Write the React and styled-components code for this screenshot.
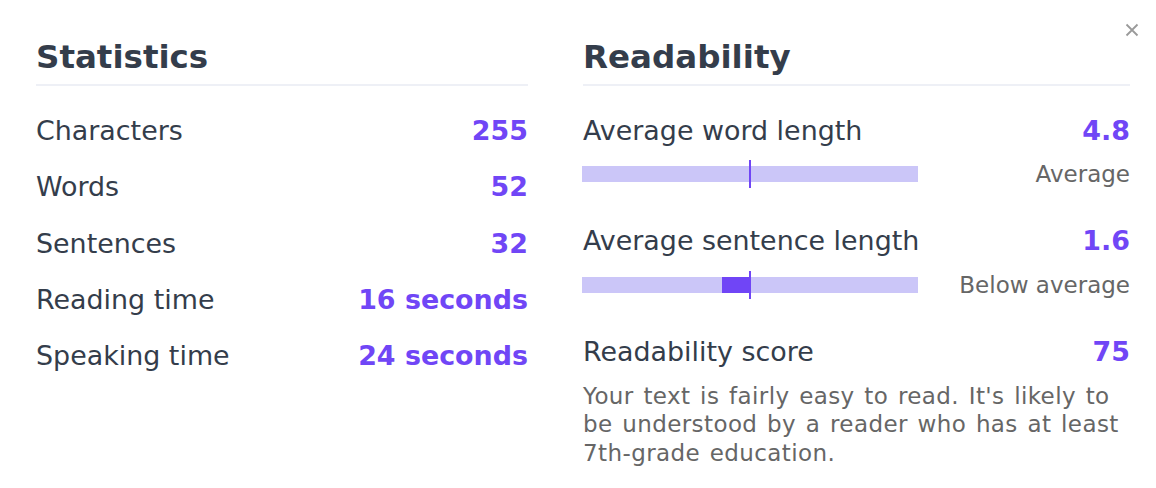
import React from 'react';
import styled, { createGlobalStyle } from 'styled-components';

const GlobalStyle = createGlobalStyle`
  body {
    margin: 0;
    background: #ffffff;
    font-family: "DejaVu Sans", Verdana, sans-serif;
  }
`;

const stats = [
  { label: 'Characters', value: '255' },
  { label: 'Words', value: '52' },
  { label: 'Sentences', value: '32' },
  { label: 'Reading time', value: '16 seconds' },
  { label: 'Speaking time', value: '24 seconds' },
];

const App = () => {
  return (
    <>
      <GlobalStyle />
      <Panel>
        <Close aria-label="close">
          <svg width="14" height="14" viewBox="0 0 14 14">
            <path d="M1.5 1.5 L12.5 12.5 M12.5 1.5 L1.5 12.5" stroke="#9a9a9a" strokeWidth="1.8" />
          </svg>
        </Close>
        <Column>
          <Title>Statistics</Title>
          <List>
            {stats.map((s) => (
              <Row key={s.label}>
                <Label>{s.label}</Label>
                <Value>{s.value}</Value>
              </Row>
            ))}
          </List>
        </Column>
        <Column>
          <Title>Readability</Title>
          <List>
            <Row>
              <Label>Average word length</Label>
              <Value>4.8</Value>
            </Row>
            <GaugeRow>
              <Track>
                <Marker />
              </Track>
              <Verdict>Average</Verdict>
            </GaugeRow>
            <Row $gap>
              <Label>Average sentence length</Label>
              <Value>1.6</Value>
            </Row>
            <GaugeRow>
              <Track>
                <Fill style={{ left: '41.7%', width: '8.3%' }} />
                <Marker />
              </Track>
              <Verdict>Below average</Verdict>
            </GaugeRow>
            <Row $gap>
              <Label>Readability score</Label>
              <Value>75</Value>
            </Row>
            <Note>
              Your text is fairly easy to read. It's likely to be understood by a reader who has at least
              7th-grade education.
            </Note>
          </List>
        </Column>
      </Panel>
    </>
  );
};

const Panel = styled.div`
  position: relative;
  display: grid;
  grid-template-columns: 492px 547px;
  column-gap: 55px;
  padding: 37px 0 0 36px;
  width: 1156px;
  height: 488px;
  box-sizing: border-box;
`;

const Close = styled.div`
  position: absolute;
  top: 23px;
  right: 17px;
  width: 14px;
  height: 14px;
  display: flex;
`;

const Column = styled.div`
  display: flex;
  flex-direction: column;
`;

const Title = styled.h2`
  margin: 0;
  font-size: 32.5px;
  line-height: 40px;
  font-weight: bold;
  color: #343d4b;
  padding-bottom: 7px;
  border-bottom: 2px solid #eef0f6;
`;

const List = styled.div`
  display: flex;
  flex-direction: column;
  margin-top: 17px;
`;

const Row = styled.div`
  display: flex;
  justify-content: space-between;
  align-items: baseline;
  height: 56.25px;
  line-height: 56px;
  font-size: 26.9px;
  margin-top: ${(p) => (p.$gap ? '24px' : '0')};
`;

const Label = styled.span`
  color: #343d4b;
`;

const Value = styled.span`
  color: #7046f6;
  font-weight: bold;
`;

const GaugeRow = styled.div`
  display: flex;
  justify-content: space-between;
  align-items: center;
  height: 30px;
`;

const Track = styled.div`
  position: relative;
  width: 336px;
  height: 16px;
  margin-left: -1px;
  background: #cbc6f8;
`;

const Fill = styled.div`
  position: absolute;
  top: 0;
  height: 100%;
  background: #7045f6;
`;

const Marker = styled.div`
  position: absolute;
  left: 167px;
  top: -6px;
  width: 2px;
  height: 28px;
  background: #7045f6;
`;

const Verdict = styled.span`
  font-size: 23px;
  color: #666666;
`;

const Note = styled.p`
  margin: 2px 0 0;
  font-size: 23px;
  line-height: 28.5px;
  letter-spacing: 0.4px;
  word-spacing: 2px;
  color: #666666;
`;

export default App;
